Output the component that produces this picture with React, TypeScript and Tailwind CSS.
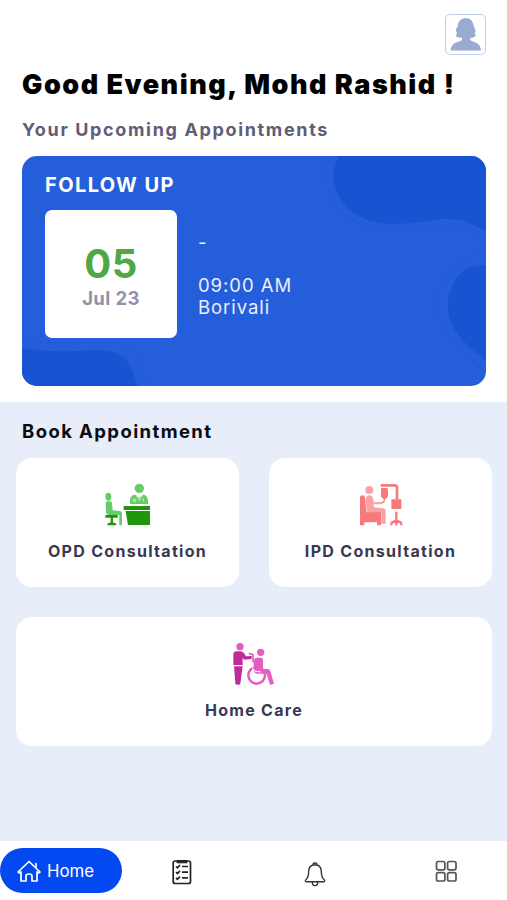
import React from 'react';

const OpdIcon = () => (
  <svg className="h-[44px] w-[48px]" viewBox="42 38 144 132">
    <g fill="#66cc66">
      <circle cx="148" cy="54" r="14" />
      <path d="M120 101v-9c0-11 6-18 15-19l13 9 12-9c9 1 14 8 14 19v9z" />
      <ellipse cx="55" cy="79" rx="9" ry="12" />
      <path d="M47 99q0-6 6-6h7q6 0 6 6l2 21 22 2q6 1 6 7v36h-8v-31H58q-9 0-10-9z" />
    </g>
    <g fill="none" stroke="#e8f8e8" strokeWidth="2.5">
      <circle cx="133" cy="90" r="4" />
      <path d="M140 77l8 13 8-13M160 84v9" />
    </g>
    <g fill="#1f960c">
      <path d="M101 107h79v12h-79zM107 122h73v42h-66z" />
      <path d="M46 134h37v8H69v14l10 4v5H52v-5l10-4v-14H46z" />
    </g>
  </svg>
);

const IpdIcon = () => (
  <svg className="h-[44px] w-[48px]" viewBox="34 38 144 132">
    <g fill="#f9a3a6">
      <circle cx="71" cy="59" r="12" />
      <path d="M60 86q2-11 11-11 9 0 11 10l3 11 25-1v7H84v9l29 3q7 1 7 8v38h-13v-31H75q-12 0-13-11z" />
    </g>
    <g fill="#f9787b">
      <path d="M43 81q0-6 7-6 7 0 8 6l4 45h40q4 0 4 5v34H94v-9H56v9H43z" />
      <rect x="137" y="87" width="30" height="29" rx="2" />
      <path d="M107 53h18l2 8v17l-6 7h-9l-6-7V61z" />
    </g>
    <g fill="none" stroke="#f9787b" strokeLinejoin="round">
      <path d="M105 45h42q7 0 7 7v36" strokeWidth="8" />
      <path d="M116 84v6q0 7-8 7" strokeWidth="4" />
      <path d="M152 124v41M137 165v-4q0-5 5-6l10-5 10 5q5 1 5 6v4" strokeWidth="7" />
    </g>
  </svg>
);

const HomeCareIcon = () => (
  <svg className="h-[44px] w-[48px]" viewBox="31 36 144 132">
    <g fill="#e75cc0">
      <circle cx="61" cy="50" r="11" />
      <circle cx="123" cy="67" r="11" />
      <path d="M102 94q1-11 11-11h11q6 0 6 6v28h14q6 0 8 6l11 38-12 4-10-34h-27q-10 0-12-10z" />
    </g>
    <g fill="#bd2d99">
      <path d="M41 75q0-11 10-11h12q6 0 10 6l6 9 17-1v9l-21 2-6-4v20H41z" />
      <path d="M43 109h26l-7 52q-1 3-6 3h-4q-5 0-5-4z" />
    </g>
    <g fill="none" stroke="#e75cc0" strokeLinecap="round">
      <path d="M89 71l11 3v22" strokeWidth="5" />
      <circle cx="111" cy="136" r="25" strokeWidth="7.5" />
    </g>
    {/* gap between the seat and the wheel */}
    <path d="M99 98v15q0 10 10 11l16 2" fill="none" stroke="#fff" strokeWidth="3" />
  </svg>
);

const CardBackground = () => (
  <svg className="absolute inset-0 h-full w-full" viewBox="22 156 463 230" preserveAspectRatio="none">
    <g fill="#1853d1">
      <path d="M338 156c-4 9-6 17-5 26 4 20 19 34 37 39 26 6 49 1 73-2 18-1 28 5 42 12v-75z" />
      <path d="M485 265c-22-1-38 16-38 41 0 24 19 39 38 55z" />
      <path d="M22 348c31 5 50 3 77 2 21 0 33 12 36 30l3 6H22z" />
    </g>
    <g fill="none" stroke="#1c50c2" strokeOpacity="0.55" strokeWidth="1" strokeDasharray="3 5">
      <path d="M329 156c-6 22-3 41 14 57 12 12 29 18 48 18 25 1 44-8 65-5 13 2 19 8 29 13" />
      <path d="M485 254c-25 2-47 20-48 48-1 30 24 50 48 69" />
      <path d="M22 340c38 6 69 2 98 3 16 4 24 18 25 43" />
    </g>
  </svg>
);

const ServiceCard = ({ label, children, className = '' }: { label: string; children: React.ReactNode; className?: string }) => (
  <div className={`flex h-[129px] flex-col items-center rounded-[16px] bg-white pt-[25px] ${className}`}>
    {children}
    <p className="mt-[12px] text-[16px] leading-6 font-bold tracking-[1.3px] whitespace-nowrap text-[#393850]">
      {label}
    </p>
  </div>
);

const BottomNav = () => (
  <nav className="flex h-[59px] items-start bg-white pt-[7px] text-[#333]">
    <button className="flex h-[45px] w-[122px] items-center rounded-full bg-[#0349f2] pl-[16px] text-white">
      <svg className="h-[24px] w-[26px]" viewBox="0 0 26 24" fill="none" stroke="currentColor" strokeWidth="1.7" strokeLinejoin="round" strokeLinecap="round">
        <path d="M2 13L13 2.5l11 10.5-1.5 1L21 12.8V22h-5v-5q0-2-3-2t-3 2v5H5v-9.2L3.5 14zM20 9V4.5" />
      </svg>
      <span className="ml-[5px] text-[16.8px] leading-6">Home</span>
    </button>
    <button className="mt-[11px] ml-[50px]">
      <svg className="block h-[26px] w-[20px]" viewBox="0 0 20 26" fill="none" stroke="#222" strokeWidth="1.7">
        <rect x="1.2" y="2" width="17.3" height="22.5" rx="2" />
        <path d="M5 1.5h10v2.3H5z" fill="#222" strokeWidth="1" />
        <path d="M4 7.5l1.4 1.3L8 6.2M10 7.5h6M4 13.2l1.4 1.3L8 11.9M10 13.2h6M4 18.9l1.4 1.3L8 17.6M10 18.9h6" />
      </svg>
    </button>
    <button className="mt-[13px] ml-[112px]">
      <svg className="block h-[27px] w-[22px]" viewBox="0 0 22 27" fill="none" stroke="currentColor" strokeWidth="1.4" strokeLinejoin="round">
        <path d="M9 4a2 2 0 1 1 4 0c3 1 4.3 3.5 4.3 6.5 0 5 .7 6.500 3 8.300q1 1.400-.8 2H2.500q-1.800-.6-.8-2c2.300-1.800 3-3.300 3-8.300C4.700 7.500 6 5 9 4zM9 4h4M8.300 21a2.700 3.600 0 0 0 5.400 0" />
      </svg>
    </button>
    <button className="mt-[12px] ml-[109px]">
      <svg className="block h-[23px] w-[23px]" viewBox="0 0 23 23" fill="none" stroke="#555" strokeWidth="1.7">
        <rect x="1.5" y="1.5" width="8.4" height="8.4" rx="1.8" />
        <rect x="12.6" y="1.5" width="8.4" height="8.4" rx="1.8" />
        <rect x="1.5" y="12.6" width="8.4" height="8.4" rx="1.8" />
        <rect x="12.6" y="12.6" width="8.4" height="8.4" rx="1.8" />
      </svg>
    </button>
  </nav>
);

const App = () => {
  return (
    <div className="flex h-[900px] w-[507px] flex-col overflow-hidden bg-white font-['Inter',sans-serif]">
      <header className="pr-[21px] pl-[22px] pt-[14px]">
        <div className="ml-auto h-[41px] w-[41px] rounded-[5px] border-[1.5px] border-[#c0cdeb] bg-white">
          <svg className="h-full w-full" viewBox="46 43 120 120">
            <path
              fill="#9aabd2"
              d="M76 106c5-5 3-9 1-14-2-6 4-9 5-16 2-15 11-23 25-23s22 8 24 23c1 7 7 10 6 16-2 5-4 9 1 14-3 6-10 7-17 7v6c2 8 31 4 33 33H60c2-29 33-25 35-33v-6c-9 0-16-1-19-7z"
            />
          </svg>
        </div>
        <h1 className="mt-[14px] text-[27px] leading-8 font-black tracking-[1.52px] whitespace-nowrap text-black">
          Good Evening, Mohd Rashid !
        </h1>
        <h2 className="mt-[17px] text-[18px] leading-6 font-bold tracking-[1.65px] text-[#5f5d78]">
          Your Upcoming Appointments
        </h2>
      </header>

      <section className="relative mt-[14px] ml-[22px] h-[230px] w-[464px] shrink-0 overflow-hidden rounded-[15px] bg-[#255eda]">
        <CardBackground />
        <div className="relative px-[23px] pt-[17px] text-white">
          <h3 className="text-[20px] leading-6 font-bold tracking-[1.4px]">FOLLOW UP</h3>
          <div className="mt-[13px] flex">
            <div className="flex h-[128px] w-[132px] flex-col items-center rounded-[7px] bg-white pt-[34px]">
              <span className="text-[40px] leading-10 font-bold tracking-[0.5px] text-[#4fa942]">05</span>
              <span className="mt-[2px] text-[18.5px] leading-6 font-bold tracking-[0.4px] text-[#9390ae]">Jul 23</span>
            </div>
            <div className="ml-[21px] pt-[21px] text-[18.5px] leading-[22px] tracking-[0.95px] text-[#e9effc]">
              <p>-</p>
              <p className="mt-[21px]">09:00 AM</p>
              <p>Borivali</p>
            </div>
          </div>
        </div>
      </section>

      <main className="mt-[16px] flex-1 bg-[#e7edf9] px-[16px] pt-[17px]">
        <h2 className="ml-[6px] text-[18.5px] leading-6 font-bold tracking-[1.4px] text-[#0b0b12]">Book Appointment</h2>
        <div className="mt-[15px] grid w-[476px] grid-cols-2 gap-x-[30px] gap-y-[30px]">
          <ServiceCard label="OPD Consultation">
            <OpdIcon />
          </ServiceCard>
          <ServiceCard label="IPD Consultation">
            <IpdIcon />
          </ServiceCard>
          <ServiceCard label="Home Care" className="col-span-2">
            <HomeCareIcon />
          </ServiceCard>
        </div>
      </main>

      <BottomNav />
    </div>
  );
};

export default App;
